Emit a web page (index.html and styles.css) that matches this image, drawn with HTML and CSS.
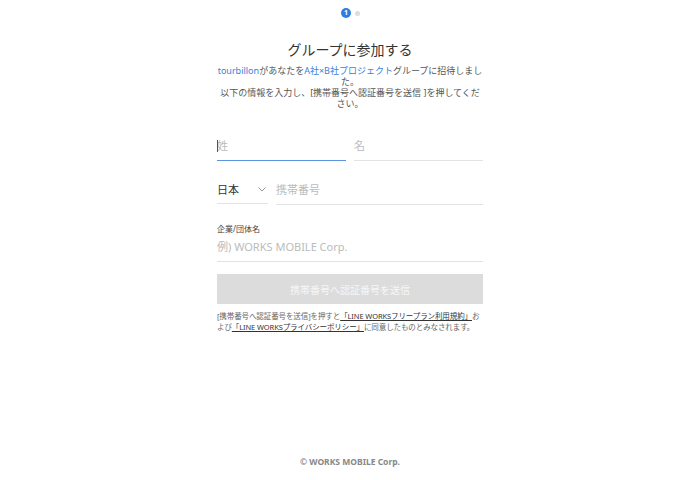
FILE: index.html
```html
<!DOCTYPE html>
<html lang="ja">
<head>
    <meta charset="utf-8">
    <title>グループに参加する</title>
    <link rel="stylesheet" href="styles.css">
</head>
<body>
    <div class="page">
        <div class="container">
            <div class="steps">
                <span class="step step-active">1</span>
                <span class="step-dot"></span>
            </div>

            <h1 class="title">グループに参加する</h1>
            <p class="desc">
                <span class="link">tourbillon</span>があなたを<span class="link">A社×B社プロジェクト</span>グループに招待しました。<br>
                以下の情報を入力し、[携帯番号へ認証番号を送信 ]を押してください。
            </p>

            <div class="row row-name">
                <div class="field field-focus">
                    <input class="input" type="text" placeholder="姓">
                    <span class="caret"></span>
                </div>
                <div class="field">
                    <input class="input" type="text" placeholder="名">
                </div>
            </div>

            <div class="row row-phone">
                <div class="field field-country">
                    <span class="country">日本</span>
                    <svg class="chevron" width="8" height="5" viewBox="0 0 8 5">
                        <path d="M0.5 0.5 L4 4 L7.5 0.5" fill="none" stroke="#999" stroke-width="1"/>
                    </svg>
                </div>
                <div class="field field-grow">
                    <input class="input" type="tel" placeholder="携帯番号">
                </div>
            </div>

            <div class="company">
                <label class="label">企業/団体名</label>
                <div class="field">
                    <input class="input input-company" type="text" placeholder="例) WORKS MOBILE Corp.">
                </div>
            </div>

            <button class="btn" disabled>携帯番号へ認証番号を送信</button>

            <p class="terms">
                [携帯番号へ認証番号を送信]を押すと<a class="terms-link" href="#">「LINE WORKSフリープラン利用規約」</a>および<a class="terms-link" href="#">「LINE WORKSプライバシーポリシー」</a>に同意したものとみなされます。
            </p>
        </div>

        <div class="footer">© WORKS MOBILE Corp.</div>
    </div>
</body>
</html>
```

FILE: styles.css
```css
body {
    margin: 0;
    background-color: #fff;
    font-family: "Noto Sans", "Noto Sans CJK JP", sans-serif;
    color: #333;
}

.page {
    min-height: 100vh;
    display: flex;
    flex-direction: column;
}

.container {
    width: 266px;
    margin: 0 auto;
    flex: 1;
}

.steps {
    display: flex;
    justify-content: center;
    align-items: center;
    gap: 4px;
    padding-top: 8px;
    padding-left: 1px;
}

.step {
    width: 10px;
    height: 10px;
    border-radius: 50%;
    font-size: 7px;
    line-height: 10px;
    text-align: center;
    font-weight: bold;
    color: #fff;
}

.step-active {
    background-color: #2f7de1;
}

.step-dot {
    width: 5px;
    height: 5px;
    border-radius: 50%;
    background-color: #ddd;
}

.title {
    margin: 22px 0 0;
    font-size: 14px;
    line-height: 20px;
    font-weight: normal;
    text-align: center;
    color: #333;
}

.desc {
    margin: 5px 0 0;
    font-size: 9px;
    line-height: 11px;
    text-align: center;
    color: #555;
}

.link {
    color: #3a7fd9;
}

.row {
    display: flex;
    gap: 8px;
}

.row-name {
    margin-top: 22px;
}

.row-name .field {
    flex: 1;
}

.row-phone {
    margin-top: 14px;
}

.field {
    position: relative;
    border-bottom: 1px solid #e3e3e3;
}

.field-focus {
    border-bottom-color: #5b93e2;
}

.field-country {
    width: 51px;
    height: 29px;
    display: flex;
    align-items: center;
    justify-content: space-between;
    box-sizing: border-box;
    padding-right: 2px;
}

.field-grow {
    flex: 1;
}

.country {
    font-size: 11px;
    color: #333;
}

.chevron {
    display: block;
}

.input {
    display: block;
    width: 100%;
    height: 29px;
    box-sizing: border-box;
    padding: 0;
    border: none;
    outline: none;
    background: transparent;
    font-family: "Noto Sans", "Noto Sans CJK JP", sans-serif;
    font-size: 11px;
    color: #333;
}

.input::placeholder {
    color: #bbb;
}

.caret {
    position: absolute;
    left: 0;
    top: 9px;
    width: 1px;
    height: 12px;
    background-color: #555;
}

.company {
    margin-top: 19px;
}

.label {
    display: block;
    font-size: 8px;
    line-height: 10px;
    color: #444;
}

.input-company {
    height: 27px;
    padding-bottom: 3px;
}

.btn {
    display: block;
    width: 100%;
    height: 30px;
    margin-top: 12px;
    border: none;
    background-color: #dcdcdc;
    color: #f7f7f7;
    font-family: "Noto Sans", "Noto Sans CJK JP", sans-serif;
    font-size: 10px;
}

.terms {
    margin: 7px 0 0;
    font-size: 7.5px;
    line-height: 11px;
    letter-spacing: -0.1px;
    color: #666;
}

.terms-link {
    color: #333;
}

.footer {
    padding-bottom: 12px;
    font-size: 8.5px;
    line-height: 12px;
    font-weight: bold;
    text-align: center;
    color: #888;
}
```
